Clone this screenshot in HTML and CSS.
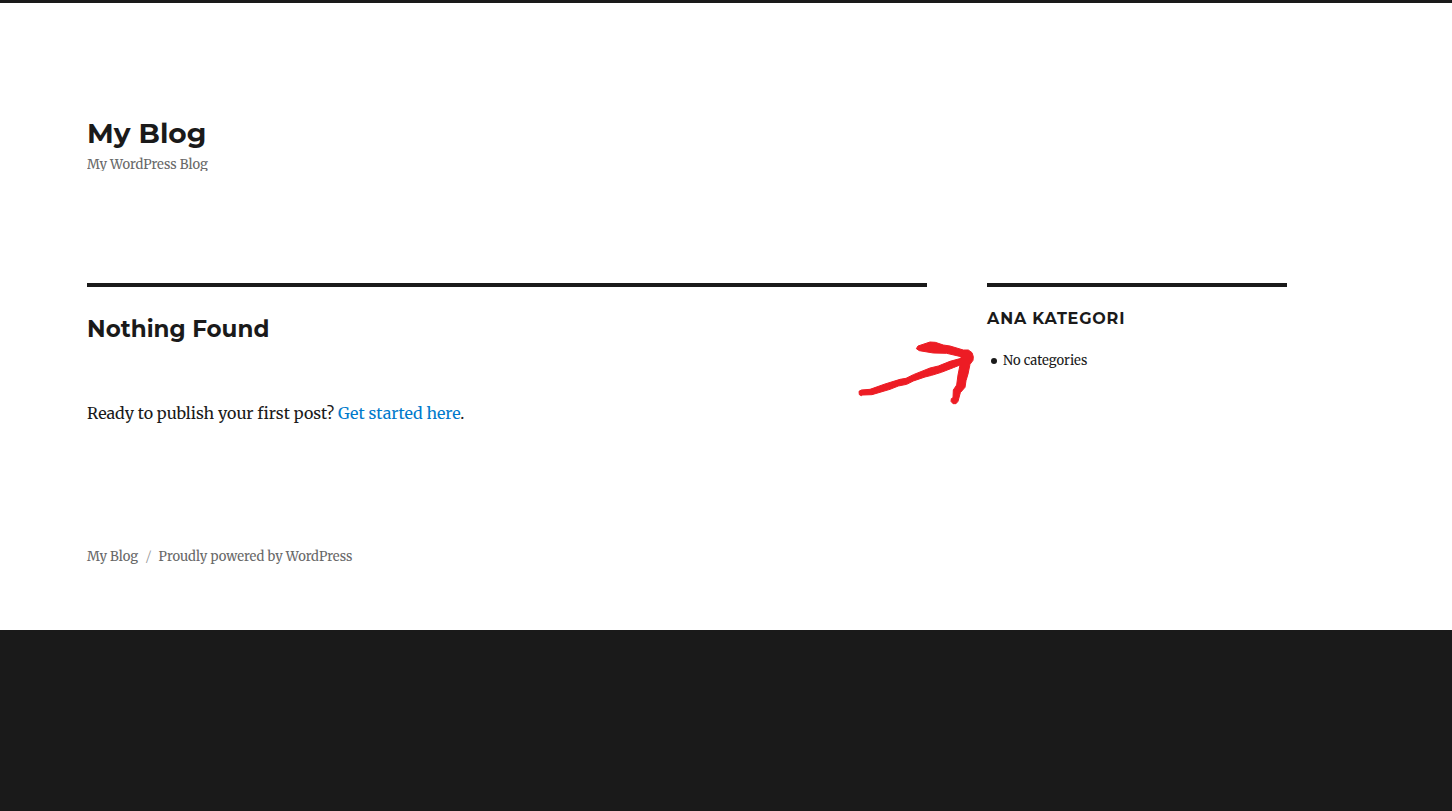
FILE: index.html
```html
<!DOCTYPE html>
<html lang="en">
<head>
    <meta charset="UTF-8">
    <meta name="viewport" content="width=device-width, initial-scale=1.0">
    <title>My Blog</title>
    <link rel="stylesheet" href="styles.css">
</head>
<body>
    <div class="site">
        <div class="site-inner">
            <header class="site-header">
                <h1 class="site-title"><a href="#">My Blog</a></h1>
                <p class="site-description">My WordPress Blog</p>
            </header>

            <div class="site-content">
                <main class="content-area">
                    <h2 class="page-title">Nothing Found</h2>
                    <p class="page-content">Ready to publish your first post? <a href="#">Get started here</a>.</p>
                </main>

                <aside class="sidebar">
                    <h2 class="widget-title">Ana Kategori</h2>
                    <ul class="widget-list">
                        <li>No categories</li>
                    </ul>
                    <svg class="arrow" viewBox="0 0 420 255" aria-hidden="true">
                        <path d="M27 184L34 180L60 178L105 162L150 148L168 145L190 134L240 114L265 108L300 94L333 85L333 80L290 70L250 69L208 62L199 56L204 48L240 36L256 37L280 45L300 48L340 60L355 60L366 68L370 80L369 91L360 103L354 132L348 152L345 172L331 188L324 214L318 221L309 221L303 214L304 206L309 203L310 180L320 165L324 135L330 105L310 113L274 127L245 136L225 141L190 153L170 163L145 168L120 178L66 194L38 195L34 197L28 194Z"/>
                    </svg>
                </aside>
            </div>

            <footer class="site-footer">
                <a href="#">My Blog</a>
                <span class="separator">/</span>
                <a href="#">Proudly powered by WordPress</a>
            </footer>
        </div>
    </div>
</body>
</html>
```
FILE: styles.css
```css
:root {
    --dark: #1a1a1a;
    --muted: #686868;
    --link: #007acc;
    --serif: Merriweather, "Liberation Serif", serif;
    --heading: Montserrat, Inter, sans-serif;
}
body {
    margin: 0;
    background-color: var(--dark);
    color: var(--dark);
    font-family: var(--serif);
    font-size: 16px;
    line-height: 28px;
}
h1, h2, p, ul {
    margin: 0;
}
a {
    color: var(--link);
    text-decoration: none;
}
.site {
    background-color: #fff;
    border-top: 3px solid var(--dark);
}
.site-inner {
    max-width: 1200px;
    margin: 0 6%;
}

/* Header */
.site-header {
    padding: 112px 0;
}
.site-title {
    font-family: var(--heading);
    font-size: 28px;
    line-height: 36px;
}
.site-title a {
    color: inherit;
}
.site-description {
    max-height: 14px;
    margin-top: 6px;
    color: var(--muted);
    font-size: 13px;
    line-height: 16px;
    overflow: hidden;
}

/* Content and sidebar */
.site-content {
    display: grid;
    grid-template-columns: 70% 25%;
    justify-content: space-between;
    align-items: start;
}
.content-area,
.sidebar {
    border-top: 4px solid var(--dark);
}
.page-title {
    padding-top: 28px;
    font-family: var(--heading);
    font-size: 23px;
    line-height: 28px;
}
.page-content {
    padding: 56px 0 112px;
}
.sidebar {
    position: relative;
    padding-top: 20px;
}
.widget-title {
    font-family: var(--heading);
    font-size: 16px;
    line-height: 24px;
    letter-spacing: 0.05em;
    text-transform: uppercase;
}
.widget-list {
    margin-top: 18px;
    padding-left: 4px;
    font-size: 13px;
    line-height: 24px;
    list-style: none;
}
.widget-list li {
    display: flex;
    align-items: center;
    gap: 6px;
}
.widget-list li::before {
    content: "";
    width: 6px;
    height: 6px;
    border-radius: 50%;
    background-color: var(--dark);
}

/* Hand-drawn arrow pointing at the category list */
.arrow {
    position: absolute;
    top: 43px;
    left: -137px;
    width: 140px;
    height: 85px;
    fill: #ed1c24;
    stroke: #ed1c24;
    stroke-width: 3;
    stroke-linejoin: round;
}

/* Footer */
.site-footer {
    display: flex;
    gap: 8px;
    padding: 6px 0 61px;
    color: var(--muted);
    font-size: 13px;
    line-height: 24px;
}
.site-footer a {
    color: inherit;
}
.separator {
    font-family: var(--heading);
    opacity: 0.7;
}
```
